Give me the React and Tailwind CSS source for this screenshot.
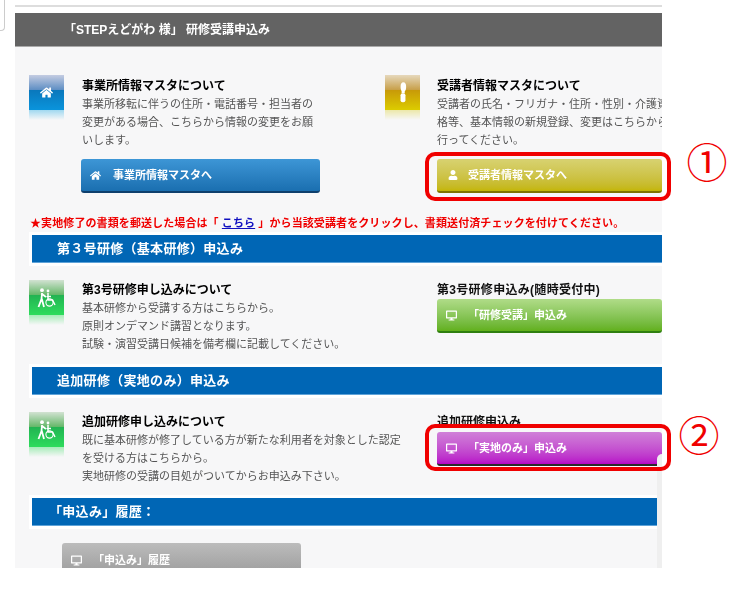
import React from 'react';
import { FaHome, FaUser, FaDesktop } from 'react-icons/fa';

const font = "font-['Liberation_Sans','Noto_Sans_CJK_JP',sans-serif]";

const Walker = () => (
    <svg viewBox="0 0 20 20" className="w-[20px] h-[20px]" fill="none" stroke="white">
        <circle cx="5" cy="2.2" r="1.9" fill="white" stroke="none" />
        <path d="M5 5 L4.5 11 L1.5 19 M4.8 11 L7 19 M5 6 L9 9" strokeWidth="1.8" />
        <circle cx="11" cy="3" r="1.4" fill="white" stroke="none" />
        <path d="M11 5 V12 H15.5 L18 17 M9.5 8.5 H14" strokeWidth="1.5" />
        <circle cx="12.5" cy="14.5" r="3.6" strokeWidth="1.1" />
    </svg>
);

const Pawn = () => (
    <svg viewBox="0 0 20 30" className="w-[14px] h-[21px]" fill="white">
        <ellipse cx="10.5" cy="7" rx="4" ry="6.5" />
        <rect x="8" y="12" width="4.5" height="4" />
        <rect x="6.5" y="16" width="7" height="13" rx="3" />
    </svg>
);

const Tile = ({ bg, fade, children }) => (
    <div className="w-[35px] shrink-0">
        <div className={`h-[35px] flex items-center justify-center ${bg}`}>{children}</div>
        <div className={`h-[10px] bg-gradient-to-b ${fade} to-transparent`}></div>
    </div>
);

const Btn = ({ icon, label, className, width = 'w-full', px = 'pl-[9px]', gap = 'gap-[12px]' }) => (
    <div className={`h-[34px] rounded-[3px] flex items-center ${px} ${gap} text-white font-bold text-[11px] ${width} ${className}`}>
        {icon}
        <span>{label}</span>
    </div>
);

const SectionBar = ({ children, className = 'mr-0' }) => (
    <div className={`ml-[14px] bg-white p-[3px] pr-0 ${className}`}>
        <div className="h-[28px] bg-[#0066b5] border-b border-[#5fa3d8] pl-[25px] flex items-center text-white font-bold text-[13px] tracking-[0.3px]">
            {children}
        </div>
    </div>
);

const Body = ({ title, lines }) => (
    <div className="w-[290px] mt-[1px]">
        <div className="text-[12px] leading-[18px] font-bold text-black">{title}</div>
        {lines.map((l) => (
            <div key={l} className="text-[11px] leading-[18px] text-[#555] whitespace-nowrap">{l}</div>
        ))}
    </div>
);

const blueTile = 'bg-[linear-gradient(#c4cce2,#5f8fc4_42%,#0a78bc_44%,#0a94dc)]';
const yellowTile = 'bg-[linear-gradient(#e6d8bc,#c8a04a_42%,#c89a08_44%,#dccc00)]';
const greenTile = 'bg-[linear-gradient(#d2e2d2,#66b86a_42%,#22b452_44%,#2edc5c)]';

export default function App() {
    return (
        <div className={`w-[748px] h-[616px] bg-white relative overflow-hidden ${font}`}>
            <div className="absolute left-0 top-0 w-[5px] h-[31px] border border-l-0 border-t-0 border-[#ccc] rounded-br-[4px]"></div>
            <div className="ml-[15px] w-[647px] pt-[5px]">
                <div className="h-[2px] bg-[#ddd] mb-[6px]"></div>
                <div className="h-[555px] bg-[#f7f7f8] overflow-hidden blur-[0.4px] relative">
                    <div className="h-[34px] bg-[#636363] border-b border-[#aaa] pl-[49px] flex items-center text-white font-bold text-[12px] whitespace-pre">
                        「STEPえどがわ 様」 研修受講申込み
                    </div>

                    <div className="flex pl-[14px] pt-[28px] h-[169px]">
                        <div className="flex gap-[18px] w-[356px]">
                            <Tile bg={blueTile} fade="from-[#a0d8f0]">
                                <FaHome className="text-white text-[13px]" />
                            </Tile>
                            <div className="pt-[1px]">
                                <Body title="事業所情報マスタについて" lines={['事業所移転に伴うの住所・電話番号・担当者の', '変更がある場合、こちらから情報の変更をお願', 'いします。']} />
                                <Btn
                                    icon={<FaHome className="text-[11px]" />}
                                    label="事業所情報マスタへ"
                                    width="w-[239px]"
                                    className="mt-[10px] -ml-[1px] bg-gradient-to-b from-[#3d96d6] to-[#1a6fb0] border-b-2 border-[#0e3f6c]"
                                />
                            </div>
                        </div>
                        <div className="flex gap-[17px] flex-1 min-w-0">
                            <Tile bg={yellowTile} fade="from-[#ece8a8]">
                                <Pawn />
                            </Tile>
                            <div className="flex-1 min-w-0 overflow-hidden pt-[1px]">
                                <Body title="受講者情報マスタについて" lines={['受講者の氏名・フリガナ・住所・性別・介護資', '格等、基本情報の新規登録、変更はこちらから', '行ってください。']} />
                                <Btn
                                    icon={<FaUser className="text-[10px]" />}
                                    label="受講者情報マスタへ"
                                    px="pl-[11px]"
                                    gap="gap-[10px]"
                                    className="mt-[10px] bg-gradient-to-b from-[#d8d270] to-[#c4b600] border-b-2 border-[#7f7400]"
                                />
                            </div>
                        </div>
                    </div>

                    <div className="pl-[15px] text-[11px] leading-[14px] font-bold text-[#f00000] tracking-[0.1px] whitespace-nowrap">
                        ★実地修了の書類を郵送した場合は「 <a className="text-[#1010c0] underline">こちら</a> 」から当該受講者をクリックし、書類送付済チェックを付けてください。
                    </div>

                    <div className="mt-[2px]">
                        <SectionBar>第３号研修（基本研修）申込み</SectionBar>
                    </div>

                    <div className="flex pl-[14px] pt-[14px] h-[98px]">
                        <div className="flex gap-[18px] w-[356px]">
                            <Tile bg={greenTile} fade="from-[#a6ecb8]"><Walker /></Tile>
                            <Body title="第3号研修申し込みについて" lines={['基本研修から受講する方はこちらから。', '原則オンデマンド講習となります。', '試験・演習受講日候補を備考欄に記載してください。']} />
                        </div>
                        <div className="pl-[52px] flex-1 min-w-0 pt-[1px]">
                            <div className="text-[12px] leading-[18px] font-bold text-[#111] tracking-[0.3px]">第3号研修申込み(随時受付中)</div>
                            <Btn
                                icon={<FaDesktop className="text-[11px]" />}
                                label="「研修受講」申込み"
                                gap="gap-[11px]"
                                className="bg-gradient-to-b from-[#b0dc88] to-[#62b01a] border-b-2 border-[#2f7f10]"
                            />
                        </div>
                    </div>

                    <SectionBar>追加研修（実地のみ）申込み</SectionBar>

                    <div className="flex pl-[14px] pt-[14px] h-[97px]">
                        <div className="flex gap-[18px] w-[356px]">
                            <Tile bg={greenTile} fade="from-[#a6ecb8]"><Walker /></Tile>
                            <Body title="追加研修申し込みについて" lines={['既に基本研修が修了している方が新たな利用者を対象とした認定', 'を受ける方はこちらから。', '実地研修の受講の目処がついてからお申込み下さい。']} />
                        </div>
                        <div className="pl-[52px] flex-1 min-w-0 pt-[1px]">
                            <div className="text-[12px] leading-[18px] font-bold text-[#111]">追加研修申込み</div>
                            <Btn
                                icon={<FaDesktop className="text-[11px]" />}
                                label="「実地のみ」申込み"
                                gap="gap-[11px]"
                                className="mt-[1px] bg-gradient-to-b from-[#d080d8] to-[#b800c8] border-b-2 border-[#2a2a2a]"
                            />
                        </div>
                    </div>

                    <SectionBar className="mr-[4px]"><span className="-ml-[8px]">「申込み」履歴：</span></SectionBar>

                    <div className="pl-[47px] pt-[14px]">
                        <Btn
                            icon={<FaDesktop className="text-[11px]" />}
                            label="「申込み」履歴"
                            gap="gap-[11px]"
                            width="w-[239px]"
                            className="bg-gradient-to-b from-[#bcbcbc] to-[#9a9a9a]"
                        />
                    </div>

                    <div className="absolute right-0 top-[441px] bottom-0 w-[5px] bg-[#efefef] rounded-tl-[5px]"></div>
                </div>
            </div>

            <div className="absolute left-[425px] top-[152px] w-[246px] h-[49px] border-4 border-[#f00000] rounded-[10px]"></div>
            <div className="absolute left-[425px] top-[424px] w-[246px] h-[47px] border-4 border-[#f00000] rounded-[10px]"></div>
            <div className="absolute left-[685px] top-[136px] w-[44px] text-center text-[41px] leading-[48px] text-[#f00000] font-['Noto_Sans_CJK_JP',sans-serif]">①</div>
            <div className="absolute left-[677px] top-[409px] w-[44px] text-center text-[41px] leading-[48px] text-[#f00000] font-['Noto_Sans_CJK_JP',sans-serif]">②</div>
        </div>
    );
}
